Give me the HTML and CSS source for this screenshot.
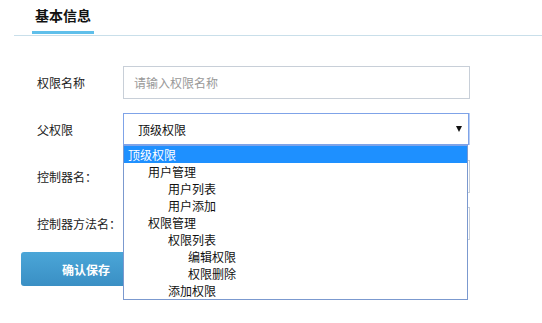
FILE: index.html
```html
<!DOCTYPE html>
<html lang="zh-CN">
<head>
<meta charset="utf-8">
<title>基本信息</title>
<link rel="stylesheet" href="styles.css">
</head>
<body>
<div class="page">
  <div class="tabs">
    <div class="tab active">基本信息</div>
  </div>
  <form class="form">
    <div class="row">
      <label class="label">权限名称</label>
      <input class="input" type="text" placeholder="请输入权限名称">
    </div>
    <div class="row">
      <label class="label">父权限</label>
      <div class="select-wrap">
        <div class="select"><span>顶级权限</span><span class="arrow"></span></div>
        <ul class="dropdown">
          <li class="opt l0 selected">顶级权限</li>
          <li class="opt l1">用户管理</li>
          <li class="opt l2">用户列表</li>
          <li class="opt l2">用户添加</li>
          <li class="opt l1">权限管理</li>
          <li class="opt l2">权限列表</li>
          <li class="opt l3">编辑权限</li>
          <li class="opt l3">权限删除</li>
          <li class="opt l2">添加权限</li>
        </ul>
      </div>
    </div>
    <div class="row">
      <label class="label">控制器名：</label>
      <input class="input" type="text">
    </div>
    <div class="row">
      <label class="label">控制器方法名：</label>
      <input class="input" type="text">
    </div>
    <div class="actions">
      <button class="btn" type="button">确认保存</button>
    </div>
  </form>
</div>
</body>
</html>
```

FILE: styles.css
```css
* { box-sizing: border-box; }
html, body { margin: 0; padding: 0; background: #fff; }
body {
  font-family: "Noto Sans CJK SC", "Noto Sans", sans-serif;
  font-size: 12px;
  color: #222;
}
.page { width: 542px; height: 323px; overflow: hidden; }

.tabs {
  margin-left: 14px;
  border-bottom: 1px solid #c9dfea;
  display: flex;
}
.tab {
  margin-left: 18px;
  width: 62px;
  text-align: center;
  font-size: 14px;
  font-weight: bold;
  line-height: 20px;
  padding-top: 5px;
  padding-bottom: 6px;
  color: #111;
  margin-bottom: 1px;
  border-bottom: 3px solid transparent;
}
.tab.active { border-bottom-color: #5fbfea; }

.form { padding-top: 30px; }
.row {
  display: flex;
  align-items: center;
  height: 33px;
  margin-bottom: 14px;
}
.label {
  width: 123px;
  padding-left: 37px;
  font-size: 12px;
  color: #222;
  white-space: nowrap;
}
.input {
  width: 347px;
  height: 33px;
  border: 1px solid #c8cfd8;
  padding: 0 10px;
  font-family: inherit;
  font-size: 12px;
  color: #222;
  outline: none;
  background: #fff;
}
.input::placeholder { color: #999; }

.select-wrap { position: relative; width: 346px; height: 33px; }
.select {
  height: 32px;
  border: 1px solid #7fa3e8;
  box-shadow: 1px 0 0 #b9cff5;
  padding: 0 6px 0 14px;
  display: flex;
  align-items: center;
  justify-content: space-between;
  font-size: 12px;
  color: #111;
  background: #fff;
}
.arrow {
  width: 0; height: 0;
  border-left: 3.5px solid transparent;
  border-right: 3.5px solid transparent;
  border-top: 6px solid #111;
}
.dropdown {
  position: absolute;
  left: 0;
  top: 32px;
  width: 345px;
  margin: 0;
  padding: 0;
  list-style: none;
  background: #fff;
  border: 1px solid #7b99cf;
  border-top: 1px solid #7fa3e8;
  z-index: 5;
}
.opt {
  height: 17px;
  line-height: 17px;
  font-size: 12px;
  color: #111;
  white-space: nowrap;
}
.opt.selected { background: #1e90ff; color: #fff; }
.l0 { padding-left: 4px; }
.l1 { padding-left: 24px; }
.l2 { padding-left: 44px; }
.l3 { padding-left: 64px; }

.actions { padding-left: 21px; margin-top: -2px; }
.btn {
  width: 130px;
  height: 34px;
  border: none;
  border-radius: 3px;
  background: linear-gradient(#4ba6d8, #3a8fc4);
  color: #fff;
  font-family: inherit;
  font-size: 12px;
  font-weight: bold;
  padding: 0;
  cursor: pointer;
}
```
